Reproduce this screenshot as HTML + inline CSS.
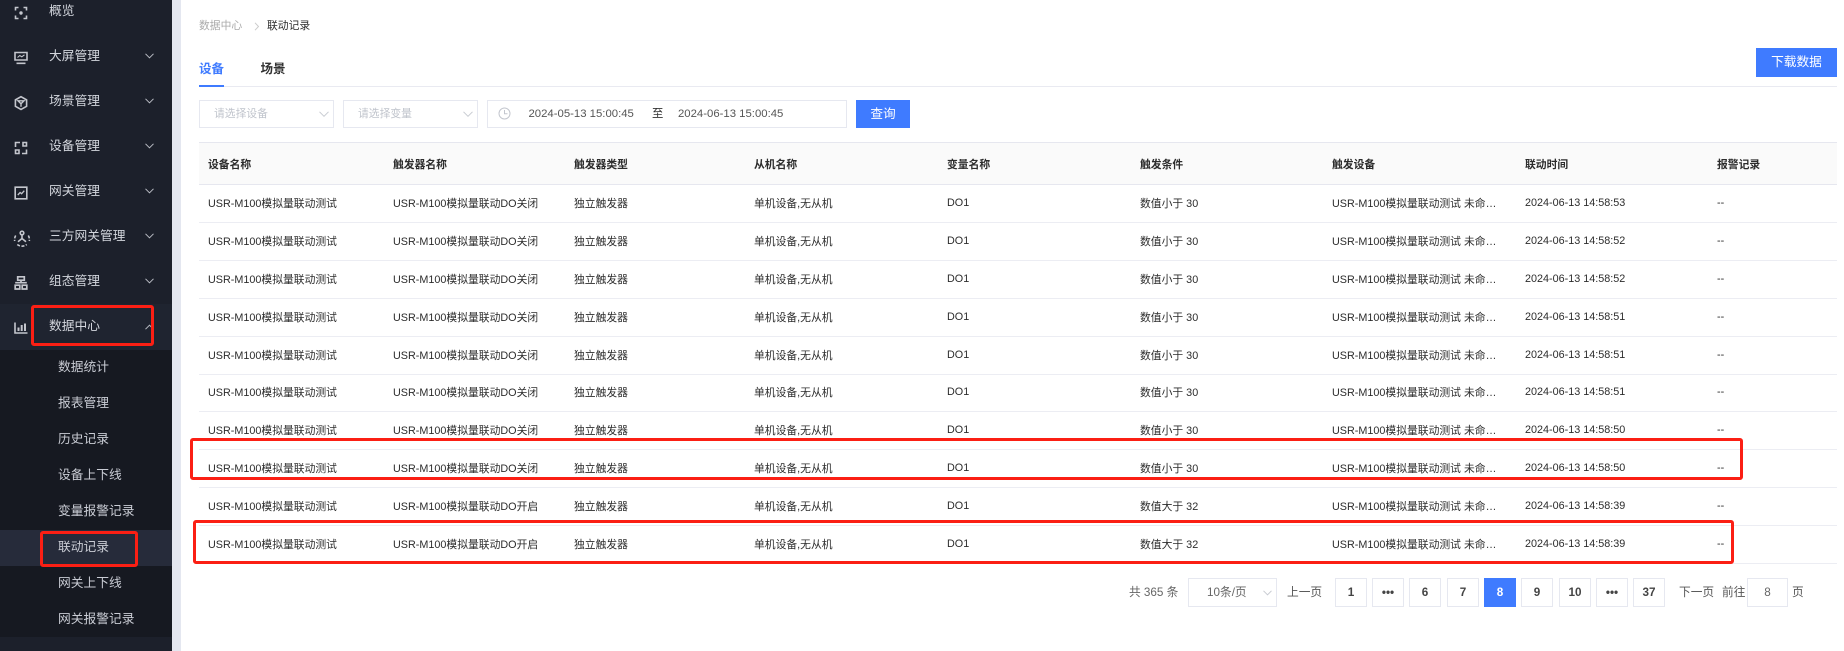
<!DOCTYPE html>
<html lang="zh-CN"><head><meta charset="utf-8"><title>联动记录</title>
<style>
*{box-sizing:border-box}
html,body{margin:0;padding:0;width:1844px;height:651px;overflow:hidden;background:#fff}
body{position:relative;font-family:"Liberation Sans","Noto Sans CJK SC",sans-serif;color:#333;font-size:10.8px}
.a{position:absolute;white-space:nowrap}
#side{position:absolute;left:0;top:0;width:172px;height:651px;background:#1c202b}
#gut{position:absolute;left:172px;top:0;width:9px;height:651px;background:#e4e7f0}
.m{position:absolute;left:49px;font-size:12.75px;line-height:20px;color:#d3d6dd;white-space:nowrap}
.s{position:absolute;left:58px;font-size:12.75px;line-height:20px;color:#c9ccd4;white-space:nowrap}
.ic{position:absolute;left:12px;width:18px;height:18px;fill:none;stroke:#c4c6cd;stroke-width:1.6}
.ch{position:absolute;left:145px;width:9px;height:6px;fill:none;stroke:#b9bcc4;stroke-width:1}
.box{position:absolute;background:#fff;border:1px solid #e6e8f0}
.ph{position:absolute;color:#c0c4cc;line-height:28px;white-space:nowrap}
.btn{position:absolute;background:#3f7bff;color:#fff;text-align:center;font-size:12.7px}
.hd,.r{position:absolute;left:199px;width:1638px;display:grid;grid-template-columns:185px 181px 180px 193px 193px 192px 193px 192px 129px;align-items:center}
.hd{top:142px;height:43px;background:#fafafa;border-top:1px solid #e6e7ef;border-bottom:1px solid #e6e7ef;font-weight:700;color:#2c2c2c}
.r{height:38px;border-bottom:1px solid #ecedf3;color:#2c2c2c}
.hd span,.r span{padding-left:9px;white-space:nowrap;overflow:hidden}
.r span{position:relative;top:-1px}
.red{position:absolute;border:3px solid #fb1f14;border-radius:3px;z-index:5}
.p{position:absolute;top:578px;height:29px;width:32px;border:1px solid #e6e8f0;text-align:center;line-height:27px;font-size:11.7px;font-weight:700;color:#444;background:#fff}
.t{position:absolute;top:585px;line-height:16px;color:#555;font-size:11.7px;white-space:nowrap}
</style></head><body>
<div id="side"></div><div id="gut"></div>
<div class="a" style="left:0;top:304px;width:172px;height:46px;background:#1f2430"></div>
<div class="a" style="left:0;top:350px;width:172px;height:287px;background:#161921"></div>
<div class="a" style="left:0;top:530px;width:172px;height:36px;background:#262b3a"></div>

<svg class="ic" style="top:4px" viewBox="0 0 18 18"><path d="M3.500 6.500V3.500H6.500M11.500 3.500h3v3M14.500 11.500v3h-3M6.500 14.500h-3v-3"/><circle cx="9" cy="9" r="1.700" fill="#c4c6cd" stroke="none"/></svg>
<svg class="ic" style="top:49px" viewBox="0 0 18 18"><path d="M3 3.500h12v7.500H3zM4.500 14.300h9"/><path d="M5.500 8.500l2.300-2 2 1.300 2.700-2" stroke-width="1.100"/></svg>
<svg class="ic" style="top:94px" viewBox="0 0 18 18"><path d="M9 2.700l5.600 3.200v6.400L9 15.500l-5.600-3.200V5.900z"/><path d="M6 6.800h6L9 9.800zM9 9.800v3" stroke-width="1.400"/></svg>
<svg class="ic" style="top:139px" viewBox="0 0 18 18"><path d="M8 3.500H3.500V8M11 3.500h3.500V7H11zM3.500 11H7v3.500H3.500zM14.500 10.500v4H10"/></svg>
<svg class="ic" style="top:184px" viewBox="0 0 18 18"><path d="M3.200 3.200h11.600v11.600H3.200z"/><path d="M5.800 11l2.300-2.500 1.500 1.200 2.700-3" stroke-width="1.300"/></svg>
<svg class="ic" style="top:229px;left:11.500px;width:20px;height:20px" viewBox="0 0 20 20"><circle cx="10" cy="4" r="1.800"/><path d="M10 5.800V9.500L6 12.800M10 9.500l4 3.300"/><path d="M3.700 6.500A8 8 0 0 0 2.700 12M16.300 6.500a8 8 0 0 1 1 5.500M5.300 15.500a7.500 7.500 0 0 0 9.400 0" stroke-dasharray="3 1.500"/></svg>
<svg class="ic" style="top:274px" viewBox="0 0 18 18"><path d="M5.700 2.800h6.600v3.400H5.700zM3.200 11.200h4.600v3.800H3.200zM10.200 11.200h4.600v3.800h-4.600zM3.200 8.700h11.600M9 6.200v2.500" stroke-width="1.700"/></svg>
<svg class="ic" style="top:318px" viewBox="0 0 18 18"><path d="M3 4.500v10.500h12.500"/><path d="M6.500 13V9.500M9.700 13V7M13 13V5.500" stroke-width="2"/></svg>

<div class="m" style="top:1px">概览</div>
<div class="m" style="top:46px">大屏管理</div>
<div class="m" style="top:91px">场景管理</div>
<div class="m" style="top:136px">设备管理</div>
<div class="m" style="top:181px">网关管理</div>
<div class="m" style="top:226px">三方网关管理</div>
<div class="m" style="top:271px">组态管理</div>
<div class="m" style="top:316px">数据中心</div>
<svg class="ch" style="top:53px" viewBox="0 0 9 6"><path d="M.5.800l4 4 4-4"/></svg>
<svg class="ch" style="top:98px" viewBox="0 0 9 6"><path d="M.5.800l4 4 4-4"/></svg>
<svg class="ch" style="top:143px" viewBox="0 0 9 6"><path d="M.5.800l4 4 4-4"/></svg>
<svg class="ch" style="top:188px" viewBox="0 0 9 6"><path d="M.5.800l4 4 4-4"/></svg>
<svg class="ch" style="top:233px" viewBox="0 0 9 6"><path d="M.5.800l4 4 4-4"/></svg>
<svg class="ch" style="top:278px" viewBox="0 0 9 6"><path d="M.5.800l4 4 4-4"/></svg>
<svg class="ch" style="top:324px" viewBox="0 0 9 6"><path d="M.5 5.200l4-4 4 4"/></svg>

<div class="s" style="top:357px">数据统计</div>
<div class="s" style="top:393px">报表管理</div>
<div class="s" style="top:429px">历史记录</div>
<div class="s" style="top:465px">设备上下线</div>
<div class="s" style="top:501px">变量报警记录</div>
<div class="s" style="top:537px">联动记录</div>
<div class="s" style="top:573px">网关上下线</div>
<div class="s" style="top:609px">网关报警记录</div>

<div class="a" style="left:199px;top:18px;line-height:16px;color:#aaa">数据中心</div>
<svg class="a" style="left:253px;top:22px" width="8" height="9" viewBox="0 0 8 9" fill="none" stroke="#ccc"><path d="M2 .8l3.500 3.700L2 8.200"/></svg>
<div class="a" style="left:267px;top:18px;line-height:16px;color:#2c2c2c">联动记录</div>

<div class="a" style="left:199px;top:59px;font-size:12.5px;line-height:20px;font-weight:700;color:#3f7bff">设备</div>
<div class="a" style="left:260.500px;top:59px;font-size:12.5px;line-height:20px;font-weight:700;color:#333">场景</div>
<div class="a" style="left:199px;top:86px;width:1638px;height:1px;background:#e9eaf1"></div>
<div class="a" style="left:199px;top:85px;width:25px;height:2px;background:#3f7bff"></div>
<div class="btn" style="left:1756px;top:48px;width:81px;height:29px;line-height:29px">下载数据</div>

<div class="box" style="left:199px;top:100px;width:135px;height:28px"></div>
<div class="ph" style="left:214px;top:100px">请选择设备</div>
<svg class="a" style="left:319px;top:111px" width="10" height="7" viewBox="0 0 10 7" fill="none" stroke="#c8cbd2"><path d="M.5.800l4.500 4.500L9.500.800"/></svg>
<div class="box" style="left:343px;top:100px;width:135px;height:28px"></div>
<div class="ph" style="left:358px;top:100px">请选择变量</div>
<svg class="a" style="left:463px;top:111px" width="10" height="7" viewBox="0 0 10 7" fill="none" stroke="#c8cbd2"><path d="M.5.800l4.500 4.500L9.500.800"/></svg>
<div class="box" style="left:487px;top:100px;width:360px;height:28px"></div>
<svg class="a" style="left:498px;top:107px" width="13" height="13" viewBox="0 0 13 13" fill="none" stroke="#c3c6ce"><circle cx="6.500" cy="6.500" r="5.500"/><path d="M6.500 3v3.800h3"/></svg>
<div class="a" style="left:528.500px;top:106px;font-size:11.35px;line-height:16px;color:#555">2024-05-13 15:00:45</div>
<div class="a" style="left:652px;top:106px;font-size:11.35px;line-height:16px;color:#333">至</div>
<div class="a" style="left:678px;top:106px;font-size:11.35px;line-height:16px;color:#555">2024-06-13 15:00:45</div>
<div class="btn" style="left:856px;top:100px;width:54px;height:28px;line-height:28px">查询</div>

<div class="hd"><span>设备名称</span><span>触发器名称</span><span>触发器类型</span><span>从机名称</span><span>变量名称</span><span>触发条件</span><span>触发设备</span><span>联动时间</span><span>报警记录</span></div>
<div class="r" style="top:185px"><span>USR-M100模拟量联动测试</span><span>USR-M100模拟量联动DO关闭</span><span>独立触发器</span><span>单机设备,无从机</span><span>DO1</span><span>数值小于 30</span><span>USR-M100模拟量联动测试 未命…</span><span>2024-06-13 14:58:53</span><span>--</span></div>
<div class="r" style="top:223px"><span>USR-M100模拟量联动测试</span><span>USR-M100模拟量联动DO关闭</span><span>独立触发器</span><span>单机设备,无从机</span><span>DO1</span><span>数值小于 30</span><span>USR-M100模拟量联动测试 未命…</span><span>2024-06-13 14:58:52</span><span>--</span></div>
<div class="r" style="top:261px"><span>USR-M100模拟量联动测试</span><span>USR-M100模拟量联动DO关闭</span><span>独立触发器</span><span>单机设备,无从机</span><span>DO1</span><span>数值小于 30</span><span>USR-M100模拟量联动测试 未命…</span><span>2024-06-13 14:58:52</span><span>--</span></div>
<div class="r" style="top:299px"><span>USR-M100模拟量联动测试</span><span>USR-M100模拟量联动DO关闭</span><span>独立触发器</span><span>单机设备,无从机</span><span>DO1</span><span>数值小于 30</span><span>USR-M100模拟量联动测试 未命…</span><span>2024-06-13 14:58:51</span><span>--</span></div>
<div class="r" style="top:337px"><span>USR-M100模拟量联动测试</span><span>USR-M100模拟量联动DO关闭</span><span>独立触发器</span><span>单机设备,无从机</span><span>DO1</span><span>数值小于 30</span><span>USR-M100模拟量联动测试 未命…</span><span>2024-06-13 14:58:51</span><span>--</span></div>
<div class="r" style="top:374px"><span>USR-M100模拟量联动测试</span><span>USR-M100模拟量联动DO关闭</span><span>独立触发器</span><span>单机设备,无从机</span><span>DO1</span><span>数值小于 30</span><span>USR-M100模拟量联动测试 未命…</span><span>2024-06-13 14:58:51</span><span>--</span></div>
<div class="r" style="top:412px"><span>USR-M100模拟量联动测试</span><span>USR-M100模拟量联动DO关闭</span><span>独立触发器</span><span>单机设备,无从机</span><span>DO1</span><span>数值小于 30</span><span>USR-M100模拟量联动测试 未命…</span><span>2024-06-13 14:58:50</span><span>--</span></div>
<div class="r" style="top:450px"><span>USR-M100模拟量联动测试</span><span>USR-M100模拟量联动DO关闭</span><span>独立触发器</span><span>单机设备,无从机</span><span>DO1</span><span>数值小于 30</span><span>USR-M100模拟量联动测试 未命…</span><span>2024-06-13 14:58:50</span><span>--</span></div>
<div class="r" style="top:488px"><span>USR-M100模拟量联动测试</span><span>USR-M100模拟量联动DO开启</span><span>独立触发器</span><span>单机设备,无从机</span><span>DO1</span><span>数值大于 32</span><span>USR-M100模拟量联动测试 未命…</span><span>2024-06-13 14:58:39</span><span>--</span></div>
<div class="r" style="top:526px"><span>USR-M100模拟量联动测试</span><span>USR-M100模拟量联动DO开启</span><span>独立触发器</span><span>单机设备,无从机</span><span>DO1</span><span>数值大于 32</span><span>USR-M100模拟量联动测试 未命…</span><span>2024-06-13 14:58:39</span><span>--</span></div>

<div class="t" style="left:1129px;color:#666">共 365 条</div>
<div class="box" style="left:1188px;top:578px;width:89px;height:29px"></div>
<div class="t" style="left:1207px;color:#666">10条/页</div>
<svg class="a" style="left:1263px;top:590px" width="9" height="6" viewBox="0 0 9 6" fill="none" stroke="#c8cbd2"><path d="M.5.800l4 4 4-4"/></svg>
<div class="t" style="left:1287px">上一页</div>
<div class="p" style="left:1335px">1</div>
<div class="p" style="left:1372px">•••</div>
<div class="p" style="left:1409px">6</div>
<div class="p" style="left:1447px">7</div>
<div class="p" style="left:1484px;background:#3f7bff;border-color:#3f7bff;color:#fff">8</div>
<div class="p" style="left:1521px">9</div>
<div class="p" style="left:1559px">10</div>
<div class="p" style="left:1596px">•••</div>
<div class="p" style="left:1633px">37</div>
<div class="t" style="left:1679px">下一页</div>
<div class="t" style="left:1722px">前往</div>
<div class="box" style="left:1747px;top:578px;width:41px;height:29px;text-align:center;line-height:27px;color:#666;font-size:11.7px">8</div>
<div class="t" style="left:1792px">页</div>

<div class="red" style="left:31px;top:305px;width:123px;height:41px"></div>
<div class="red" style="left:40px;top:531px;width:98px;height:36px"></div>
<div class="red" style="left:190px;top:438px;width:1553px;height:42px"></div>
<div class="red" style="left:193px;top:520px;width:1541px;height:44px"></div>
</body></html>
